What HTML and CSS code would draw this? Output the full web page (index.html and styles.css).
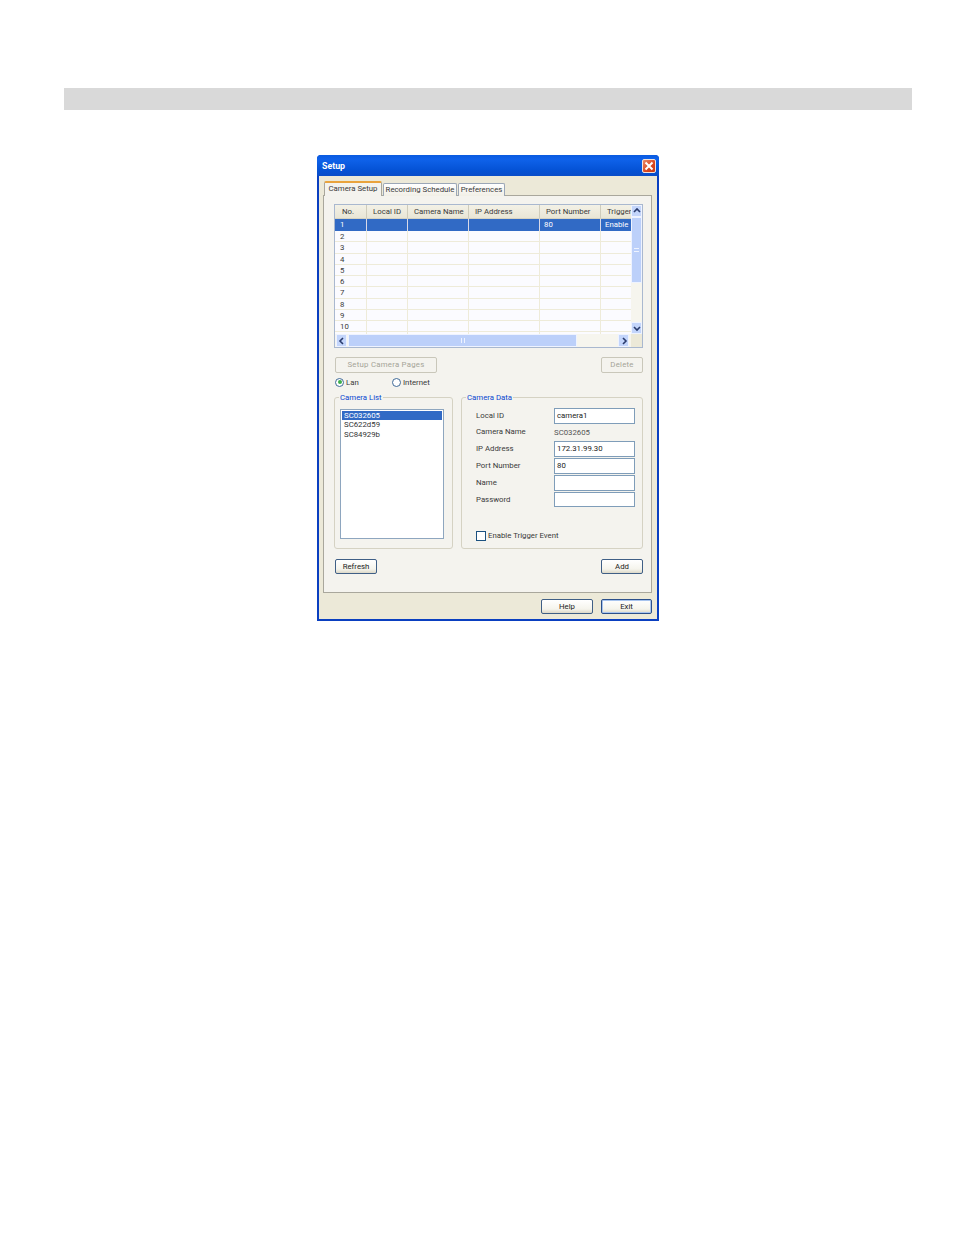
FILE: index.html
```html
<!DOCTYPE html>
<html lang="en">
<head>
<meta charset="utf-8">
<title>Setup</title>
<link rel="stylesheet" href="styles.css">
</head>
<body>
<div class="band"></div>
<div class="dialog">
  <div class="titlebar">
    <span class="title">Setup</span>
    <span class="close"><svg viewBox="0 0 14 14" width="14" height="14"><path d="M3.5 3.5 10.5 10.5M10.5 3.5 3.5 10.5" stroke="#fff" stroke-width="2" fill="none"/></svg></span>
  </div>
  <div class="client">
    <div class="tabs">
      <span class="tab active">Camera Setup</span>
      <span class="tab t2">Recording Schedule</span>
      <span class="tab t3">Preferences</span>
    </div>
    <div class="panel">
      <div class="listview">
        <div class="lv-main">
          <div class="row head"><span>No.</span><span>Local ID</span><span>Camera Name</span><span>IP Address</span><span>Port Number</span><span>Trigger</span></div>
          <div class="row sel"><span>1</span><span></span><span></span><span></span><span>80</span><span>Enable</span></div>
          <div class="row"><span>2</span><span></span><span></span><span></span><span></span><span></span></div>
          <div class="row"><span>3</span><span></span><span></span><span></span><span></span><span></span></div>
          <div class="row"><span>4</span><span></span><span></span><span></span><span></span><span></span></div>
          <div class="row"><span>5</span><span></span><span></span><span></span><span></span><span></span></div>
          <div class="row"><span>6</span><span></span><span></span><span></span><span></span><span></span></div>
          <div class="row"><span>7</span><span></span><span></span><span></span><span></span><span></span></div>
          <div class="row"><span>8</span><span></span><span></span><span></span><span></span><span></span></div>
          <div class="row"><span>9</span><span></span><span></span><span></span><span></span><span></span></div>
          <div class="row"><span>10</span><span></span><span></span><span></span><span></span><span></span></div>
          <div class="row"><span>11</span><span></span><span></span><span></span><span></span><span></span></div>
        </div>
        <div class="vscroll">
          <span class="sb-btn"><svg viewBox="0 0 10 10" width="10" height="10"><path d="M2 6 5 3 8 6" class="chev"/></svg></span>
          <span class="v-thumb"><i></i></span>
          <span class="sb-btn v-down"><svg viewBox="0 0 10 10" width="10" height="10"><path d="M2 4 5 7 8 4" class="chev"/></svg></span>
        </div>
        <div class="hscroll">
          <span class="sb-btn h-left"><svg viewBox="0 0 10 10" width="10" height="10"><path d="M6 2 3 5 6 8" class="chev"/></svg></span>
          <span class="h-thumb"><i></i></span>
          <span class="sb-btn h-right"><svg viewBox="0 0 10 10" width="10" height="10"><path d="M4 2 7 5 4 8" class="chev"/></svg></span>
        </div>
        <div class="corner"></div>
      </div>

      <div class="btn-row first">
        <button class="btn disabled wide" type="button">Setup Camera Pages</button>
        <button class="btn disabled small" type="button">Delete</button>
      </div>

      <div class="radios">
        <label class="radio"><span class="dot on"></span>Lan</label>
        <label class="radio"><span class="dot"></span>Internet</label>
      </div>

      <div class="groups">
        <fieldset class="group g-list">
          <legend>Camera List</legend>
          <div class="listbox">
            <div class="item sel">SC032605</div>
            <div class="item">SC622d59</div>
            <div class="item">SC84929b</div>
          </div>
        </fieldset>
        <fieldset class="group g-data">
          <legend>Camera Data</legend>
          <div class="form">
            <span class="lbl">Local ID</span><span class="input">camera1</span>
            <span class="lbl">Camera Name</span><span class="static">SC032605</span>
            <span class="lbl">IP Address</span><span class="input">172.31.99.30</span>
            <span class="lbl">Port Number</span><span class="input">80</span>
            <span class="lbl">Name</span><span class="input"></span>
            <span class="lbl">Password</span><span class="input last"></span>
          </div>
          <label class="check"><span class="box"></span>Enable Trigger Event</label>
        </fieldset>
      </div>

      <div class="btn-row second">
        <button class="btn small" type="button">Refresh</button>
        <button class="btn small" type="button">Add</button>
      </div>
    </div>
    <div class="footer">
      <button class="btn foot" type="button">Help</button>
      <button class="btn foot default" type="button">Exit</button>
    </div>
  </div>
</div>
</body>
</html>
```
FILE: styles.css
```css
* { box-sizing: border-box; }
html, body { margin: 0; padding: 0; background: #fff; }
body {
  width: 954px; height: 1235px; padding-top: 88px; overflow: hidden;
  font-family: Roboto, "Liberation Sans", Arial, sans-serif; font-size: 7.8px; color: #3a3a3a;
}
.band { width: 848px; height: 22px; margin-left: 64px; background: #d9d9d9; }

.dialog {
  width: 342px; height: 466px; margin: 45px 0 0 317px;
  display: flex; flex-direction: column;
  background: #0a3fc0; border-radius: 4px 4px 0 0; overflow: hidden;
}
.titlebar {
  height: 21px; flex: none; display: flex; align-items: center; justify-content: space-between;
  padding: 1px 3px 0 5px;
  background: linear-gradient(#0a5be0, #0f62ea 20%, #0553d6 70%, #0a4dc8);
}
.title { color: #fff; font-size: 8.8px; font-weight: bold; }
.close {
  width: 14px; height: 14px; border: 1px solid #f3e3dc; border-radius: 2px;
  background: linear-gradient(135deg, #e98a6a, #d9471f 60%, #c83a17);
  display: flex; align-items: center; justify-content: center;
}
.close svg { flex: none; }

.client {
  flex: 1; margin: 0 2px 2px; background: #ece9d8;
  padding: 0 5px 0 4px; display: flex; flex-direction: column; min-height: 0;
}
.tabs { height: 20px; flex: none; display: flex; align-items: flex-end; padding-left: 1px; position: relative; z-index: 1; margin-bottom: -1px; }
.tab {
  height: 13px; margin-right: 1px; padding-bottom: 1px; display: flex; align-items: center; justify-content: center;
  border: 1px solid #9ba7b7; border-bottom: 0; border-radius: 2px 2px 0 0;
  background: linear-gradient(#fff, #f1efe6); white-space: nowrap;
}
.tab.active {
  height: 15px; width: 58px; border-color: #a9a79c;
  border-top: 2px solid #e9a33c; background: #f4f3ee; padding-bottom: 3px;
}
.tab.t2 { width: 74px; }
.tab.t3 { width: 47px; }

.panel {
  width: 329px; height: 398px; flex: none; background: #f4f3ee;
  border: 1px solid #a9a79c; padding: 8px 9px 0 10px;
}

.listview {
  width: 309px; height: 144px;
  display: grid; grid-template-columns: 1fr 11px; grid-template-rows: 1fr 13px;
  border: 1px solid #a9b8cf; background: #fbfbff;
}
.lv-main { overflow: hidden; min-height: 0; }
.row {
  display: grid; grid-template-columns: 32px 41px 61px 71px 61px 30px;
  height: 11.27px; line-height: 11px; border-bottom: 1px solid #eeebd9;
}
.row > span { padding-left: 5px; border-right: 1px solid #eeebd9; white-space: nowrap; overflow: hidden; }
.row > span:nth-child(n+5) { padding-left: 4px; }
.row > span:last-child { border-right: 0; }
.row.head {
  height: 13.5px; line-height: 14px; background: linear-gradient(#f3f1e6, #e9e6d6);
  border-bottom: 1px solid #d6d3c2;
}
.row.head > span { padding-left: 6px; border-right: 1px solid #cfccbb; }
.row.head > span:first-child { padding-left: 7px; }
.row.head > span:last-child { border-right: 0; }
.row.sel { background: #316ac5; color: #fff; height: 12.5px; line-height: 12px; border-bottom: 0; }
.row.sel > span { border-right: 1px solid #d9d9e8; }
.row.sel > span:last-child { border-right: 0; }

.vscroll { grid-column: 2; grid-row: 1; background: #f6f5ee; display: flex; flex-direction: column; }
.hscroll { grid-column: 1; grid-row: 2; background: #f6f5ee; display: flex; }
.corner { background: #ece9d8; }
.sb-btn {
  flex: none; width: 11px; height: 12px; display: flex; align-items: center; justify-content: center;
  background: #c3d5fb; border: 1px solid #eef3ff;
}
.sb-btn svg { flex: none; }
.hscroll .sb-btn { height: 13px; }
.chev { fill: none; stroke: #2a3c6e; stroke-width: 1.6; }
.v-thumb {
  width: 11px; height: 66px; flex: none; background: #bcd0fa; border: 1px solid #eef3ff;
  display: flex; align-items: center; justify-content: center;
}
.v-thumb i { width: 5px; height: 4px; border-top: 1px solid #eef3ff; border-bottom: 1px solid #eef3ff; }
.v-down { margin-top: auto; }
.h-left { margin-left: 1px; }
.h-thumb {
  width: 229px; height: 13px; flex: none; background: #bcd0fa; border: 1px solid #eef3ff; margin-left: 1px;
  display: flex; align-items: center; justify-content: center;
}
.h-thumb i { width: 4px; height: 5px; border-left: 1px solid #eef3ff; border-right: 1px solid #eef3ff; }
.h-right { margin-left: auto; margin-right: 2px; }

.btn-row { width: 309px; display: flex; justify-content: space-between; padding-left: 1px; }
.btn-row.first { margin-top: 9px; }
.btn-row.second { margin-top: 10px; }
.btn {
  font: inherit; color: #222; padding: 0; height: 15.5px; border: 1px solid #3f5f86; border-radius: 2px;
  background: linear-gradient(#fff, #f5f4ec 70%, #dcd8c8);
}
.btn.small { width: 42px; }
.btn.wide { width: 102px; }
.btn.disabled { color: #a5a498; border-color: #c9c7ba; background: #f4f3ee; }
.btn-row.first .btn { letter-spacing: .25px; }

.radios { display: flex; height: 11px; margin-top: 4px; padding-left: 1px; }
.radio { display: flex; align-items: center; gap: 2px; width: 57px; }
.dot {
  width: 9px; height: 9px; border-radius: 50%; border: 1px solid #3f6a98; background: #fff;
  display: flex; align-items: center; justify-content: center; flex: none;
}
.dot.on::after { content: ""; width: 4px; height: 4px; border-radius: 50%; background: #3cae4b; }

.groups { display: flex; gap: 8px; margin-top: 5px; width: 309px; }
.group {
  margin: 0; padding: 0; height: 156px; border: 1px solid #d5d2c3; border-radius: 3px; min-width: 0;
}
.group legend { padding: 0 1px; color: #0a46d0; line-height: 10px; }
.g-list { width: 119px; padding: 6px 8px 0 5px; }
.g-list legend { margin-left: -1px; }
.g-data { width: 182px; padding: 5px 7px 0 14px; }
.g-data legend { margin-left: -10px; }
.listbox { width: 104px; height: 130px; background: #fff; border: 1px solid #8ea6bf; padding: 1px; }
.item { height: 9.5px; line-height: 9.5px; padding-left: 2px; color: #333; }
.item.sel { background: #316ac5; color: #fff; }

.form { display: grid; grid-template-columns: 78px 81px; grid-template-rows: 16px 15px 16px 16px 16px 16px; row-gap: 1px; align-items: center; }
.form > .lbl { line-height: 12px; }
.input {
  height: 100%; border: 1px solid #7f9db9; background: #fff; display: flex; align-items: center; padding-left: 2px; color: #222;
}
.input.last { height: 15px; align-self: start; }
.static { color: #555; }
.check { display: flex; align-items: center; gap: 2px; margin-top: 23px; }
.box { width: 10px; height: 10px; border: 1px solid #1c5180; background: #fff; flex: none; }

.footer { flex: 1; display: flex; justify-content: flex-end; align-items: center; gap: 8px; }
.btn.foot { width: 52px; height: 15px; }
.btn.foot.default { width: 51px; border-color: #2b4f8a; box-shadow: inset 0 0 0 1px #a8c4ee; }
```
